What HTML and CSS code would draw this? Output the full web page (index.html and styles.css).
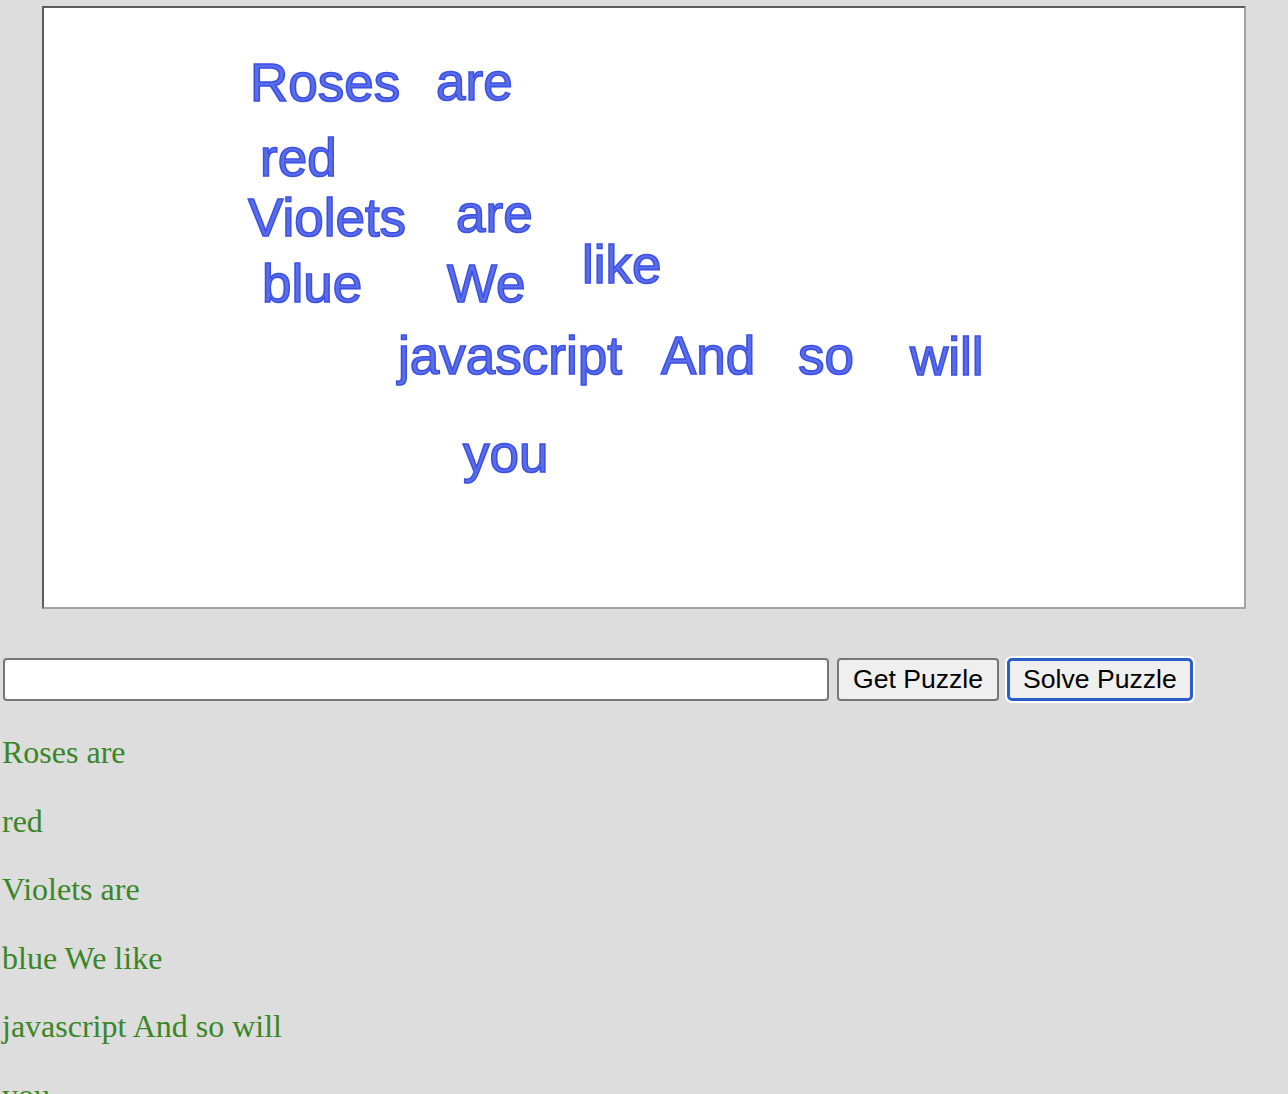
FILE: index.html
```html
<!DOCTYPE html>
<html>
<head>
<meta charset="utf-8">
<title>Puzzle</title>
<link rel="stylesheet" href="styles.css">
</head>
<body>
<div class="board">
  <span class="word" style="left:206px;top:48px">Roses</span>
  <span class="word" style="left:392px;top:47px">are</span>
  <span class="word" style="left:216px;top:123px">red</span>
  <span class="word" style="left:204px;top:183px">Violets</span>
  <span class="word" style="left:412px;top:179px">are</span>
  <span class="word" style="left:218px;top:249px">blue</span>
  <span class="word" style="left:403px;top:249px">We</span>
  <span class="word" style="left:538px;top:230px">like</span>
  <span class="word" style="left:354px;top:321px">javascript</span>
  <span class="word" style="left:617px;top:321px">And</span>
  <span class="word" style="left:754px;top:321px">so</span>
  <span class="word" style="left:866px;top:322px">will</span>
  <span class="word" style="left:419px;top:419px">you</span>
</div>
<div class="controls">
  <input class="answer" type="text">
  <button class="btn">Get Puzzle</button>
  <button class="btn btn-focus">Solve Puzzle</button>
</div>
<p class="line">Roses are</p>
<p class="line">red</p>
<p class="line">Violets are</p>
<p class="line">blue We like</p>
<p class="line">javascript And so will</p>
<p class="line">you</p>
</body>
</html>
```

FILE: styles.css
```css
html, body {
  margin: 0;
  padding: 0;
  background: #dddddd;
}

body {
  font-family: "Liberation Serif", "Times New Roman", serif;
}

.board {
  position: relative;
  box-sizing: border-box;
  width: 1204px;
  height: 603px;
  margin: 6px auto 0;
  background: #ffffff;
  border-style: solid;
  border-width: 2px;
  border-color: #5c5c5c #a3a3a3 #a3a3a3 #5c5c5c;
  overflow: hidden;
}

.word {
  position: absolute;
  font-family: "Liberation Sans", Arial, sans-serif;
  font-size: 53px;
  line-height: 53px;
  white-space: nowrap;
  color: #5b6ee9;
  -webkit-text-stroke: 1.6px #3c50e4;
  text-shadow: 0 0 1px rgba(80, 100, 235, 0.6);
}

.controls {
  display: flex;
  align-items: stretch;
  gap: 8px;
  margin-top: 49px;
  padding-left: 3px;
  padding-bottom: 1px;
  height: 43px;
}

.answer {
  box-sizing: border-box;
  width: 826px;
  height: 43px;
  margin: 0;
  padding: 0 6px;
  border: 2px solid #767676;
  border-radius: 4px;
  background: #ffffff;
  font-family: "Liberation Sans", Arial, sans-serif;
  font-size: 26px;
}

.btn {
  box-sizing: border-box;
  height: 43px;
  margin: 0;
  padding: 0 14px;
  border: 2px solid #767676;
  border-radius: 4px;
  background: #efefef;
  color: #000000;
  font-family: "Liberation Sans", Arial, sans-serif;
  font-size: 26.6px;
}

.btn-focus {
  border: 3px solid #2a5fca;
  box-shadow: 0 0 0 2px #ffffff;
  padding: 0 13px;
  border-radius: 5px;
}

.line {
  margin: 32px 0;
  padding-left: 2px;
  font-size: 32px;
  line-height: 36.5px;
  color: #398627;
}
```
